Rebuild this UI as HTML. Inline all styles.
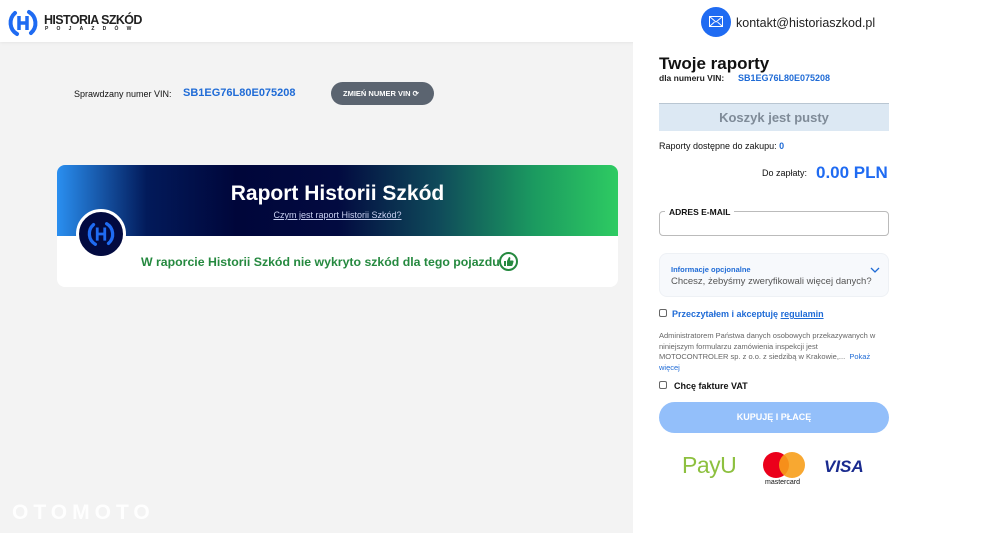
<!DOCTYPE html>
<html><head><meta charset="utf-8"><style>
*{margin:0;padding:0;box-sizing:border-box}
body{width:1000px;height:533px;overflow:hidden;font-family:"Liberation Sans",sans-serif;background:#f3f3f3;position:relative;color:#111}
.a{position:absolute}
</style></head><body>
<div class="a" style="left:0;top:0;width:1000px;height:42px;background:#fff;box-shadow:0 1px 3px rgba(0,0,0,.06)"></div>
<svg class="a" style="left:7px;top:7px" width="32" height="32" viewBox="0 0 32 32"><path d="M8 6 A13 13 0 0 0 10 27" fill="none" stroke="#1f6bf2" stroke-width="4" stroke-linecap="round"/><path d="M24 26 A13 13 0 0 0 22 5" fill="none" stroke="#1f6bf2" stroke-width="4" stroke-linecap="round"/><path d="M12 9v14M20 9v14M12 16h8" stroke="#1f6bf2" stroke-width="3.5"/></svg>
<div class="a" style="left:44px;top:13px;font-weight:bold;font-size:12.5px;color:#222;letter-spacing:-.6px">HISTORIA SZKÓD</div>
<div class="a" style="left:45px;top:26px;font-size:5px;letter-spacing:8.2px;color:#222;font-weight:bold">POJAZDÓW</div>
<div class="a" style="left:701px;top:7px;width:30px;height:30px;border-radius:50%;background:#1f6bf2"></div>
<svg class="a" style="left:709px;top:16px" width="14" height="11" viewBox="0 0 14 11"><rect x=".5" y=".5" width="13" height="10" fill="none" stroke="#fff"/><path d="M.5 .5l6.5 5.5 6.5-5.5M.5 10.5l5-4.5M13.5 10.5l-5-4.5" fill="none" stroke="#fff"/></svg>
<div class="a" style="left:736px;top:16px;font-size:12.5px;color:#222">kontakt@historiaszkod.pl</div>

<div class="a" style="left:633px;top:42px;width:367px;height:491px;background:#fff"></div>

<div class="a" style="left:74px;top:89px;font-size:9px">Sprawdzany numer VIN:</div>
<div class="a" style="left:183px;top:87px;font-size:11px;font-weight:bold;color:#1f6bd6">SB1EG76L80E075208</div>
<div class="a" style="left:331px;top:82px;width:103px;height:23px;border-radius:12px;background:#5b6470;color:#fff;font-size:7.5px;font-weight:bold;line-height:23px;padding-left:12px">ZMIEŃ NUMER VIN ⟳</div>

<div class="a" style="left:57px;top:165px;width:561px;height:122px;border-radius:8px;background:#fff;overflow:hidden">
<div style="height:71px;background:linear-gradient(90deg,#2a8ff0 0%,#021a5a 16%,#00063a 32%,#020a40 50%,#0f4a5a 68%,#1b9a60 85%,#2ecb62 100%)"></div>
</div>
<div class="a" style="left:57px;top:182px;width:561px;text-align:center;font-size:21px;font-weight:bold;color:#fff">Raport Historii Szkód</div>
<div class="a" style="left:57px;top:210px;width:561px;text-align:center;font-size:9px;color:#c8d0f0;text-decoration:underline">Czym jest raport Historii Szkód?</div>
<div class="a" style="left:76px;top:209px;width:50px;height:50px;border-radius:50%;background:#020a40;border:3px solid #fff"></div>
<svg class="a" style="left:86px;top:219px" width="30" height="30" viewBox="0 0 32 32"><path d="M8 6 A13 13 0 0 0 10 27" fill="none" stroke="#1f6bf2" stroke-width="3.5" stroke-linecap="round"/><path d="M24 26 A13 13 0 0 0 22 5" fill="none" stroke="#1f6bf2" stroke-width="3.5" stroke-linecap="round"/><path d="M12 9v14M20 9v14M12 16h8" stroke="#1f6bf2" stroke-width="3"/></svg>
<div class="a" style="left:141px;top:255px;font-size:12.3px;font-weight:bold;color:#25893f">W raporcie Historii Szkód nie wykryto szkód dla tego pojazdu</div>
<div class="a" style="left:499px;top:252px;width:19px;height:19px;border-radius:50%;border:2px solid #25893f;background:#fff"></div>
<svg class="a" style="left:503px;top:256px" width="11" height="11" viewBox="0 0 11 11"><path d="M1 5h2v5H1zM4 5l2-4c1 0 1.5.6 1.3 1.6L7 4.5h2.5c.8 0 1.2.7 1 1.3l-1 3.5c-.2.5-.6.7-1 .7H4z" fill="#25893f"/></svg>

<div class="a" style="left:659px;top:54px;font-size:17px;font-weight:bold">Twoje raporty</div>
<div class="a" style="left:659px;top:73px;font-size:8.5px;font-weight:bold;color:#222">dla numeru VIN:</div>
<div class="a" style="left:738px;top:73px;font-size:9px;font-weight:bold;color:#1f6bd6">SB1EG76L80E075208</div>
<div class="a" style="left:659px;top:103px;width:230px;height:28px;background:#dce8f3;border-top:1px solid #b9c6d2;text-align:center;line-height:27px;font-size:13px;color:#7f8b98;font-weight:bold">Koszyk jest pusty</div>
<div class="a" style="left:659px;top:141px;font-size:9px">Raporty dostępne do zakupu: <span style="color:#1f6bd6;font-weight:bold">0</span></div>
<div class="a" style="left:762px;top:168px;font-size:9px">Do zapłaty:</div>
<div class="a" style="left:816px;top:163px;font-size:17px;font-weight:bold;color:#1f6bf2">0.00 PLN</div>
<div class="a" style="left:659px;top:211px;width:230px;height:25px;border:1px solid #bbb;border-radius:4px"></div>
<div class="a" style="left:665px;top:207px;background:#fff;padding:0 4px;font-size:8.5px;font-weight:bold">ADRES E-MAIL</div>
<div class="a" style="left:659px;top:253px;width:230px;height:44px;border-radius:8px;background:#f7f9fc;border:1px solid #eef1f5"></div>
<div class="a" style="left:671px;top:265px;font-size:7.5px;color:#1f6bd6;font-weight:bold">Informacje opcjonalne</div>
<div class="a" style="left:671px;top:276px;font-size:9.5px;color:#555">Chcesz, żebyśmy zweryfikowali więcej danych?</div>
<svg class="a" style="left:870px;top:267px" width="10" height="7" viewBox="0 0 10 7"><path d="M1 1l4 4 4-4" fill="none" stroke="#1f6bd6" stroke-width="1.3"/></svg>
<div class="a" style="left:659px;top:309px;width:8px;height:8px;border:1px solid #666;border-radius:2px"></div>
<div class="a" style="left:672px;top:309px;font-size:9px;font-weight:bold;color:#1f6bd6">Przeczytałem i akceptuję <u>regulamin</u></div>
<div class="a" style="left:659px;top:331px;width:230px;font-size:7.5px;line-height:10.5px;color:#666">Administratorem Państwa danych osobowych przekazywanych w niniejszym formularzu zamówienia inspekcji jest MOTOCONTROLER sp. z o.o. z siedzibą w Krakowie,... &nbsp;<span style="color:#1f6bd6">Pokaż więcej</span></div>
<div class="a" style="left:659px;top:381px;width:8px;height:8px;border:1px solid #666;border-radius:2px"></div>
<div class="a" style="left:674px;top:381px;font-size:9px;font-weight:bold">Chcę fakture VAT</div>
<div class="a" style="left:659px;top:402px;width:230px;height:31px;border-radius:16px;background:#93bffa;color:#fff;font-size:9px;font-weight:bold;text-align:center;line-height:31px">KUPUJĘ I PŁACĘ</div>
<div class="a" style="left:682px;top:452px;font-size:23px;color:#8dc03f;letter-spacing:-.5px">PayU</div>
<div class="a" style="left:763px;top:452px;width:26px;height:26px;border-radius:50%;background:#eb001b"></div>
<div class="a" style="left:779px;top:452px;width:26px;height:26px;border-radius:50%;background:#f79e1b;opacity:.9"></div>
<div class="a" style="left:765px;top:479px;font-size:7px">mastercard</div>
<div class="a" style="left:824px;top:457px;font-size:17px;font-weight:bold;font-style:italic;color:#1a2b8f">VISA</div>
<div class="a" style="left:12px;top:501px;font-size:21px;font-weight:bold;color:rgba(255,255,255,.9);letter-spacing:5px">OTOMOTO</div>
</body></html>
